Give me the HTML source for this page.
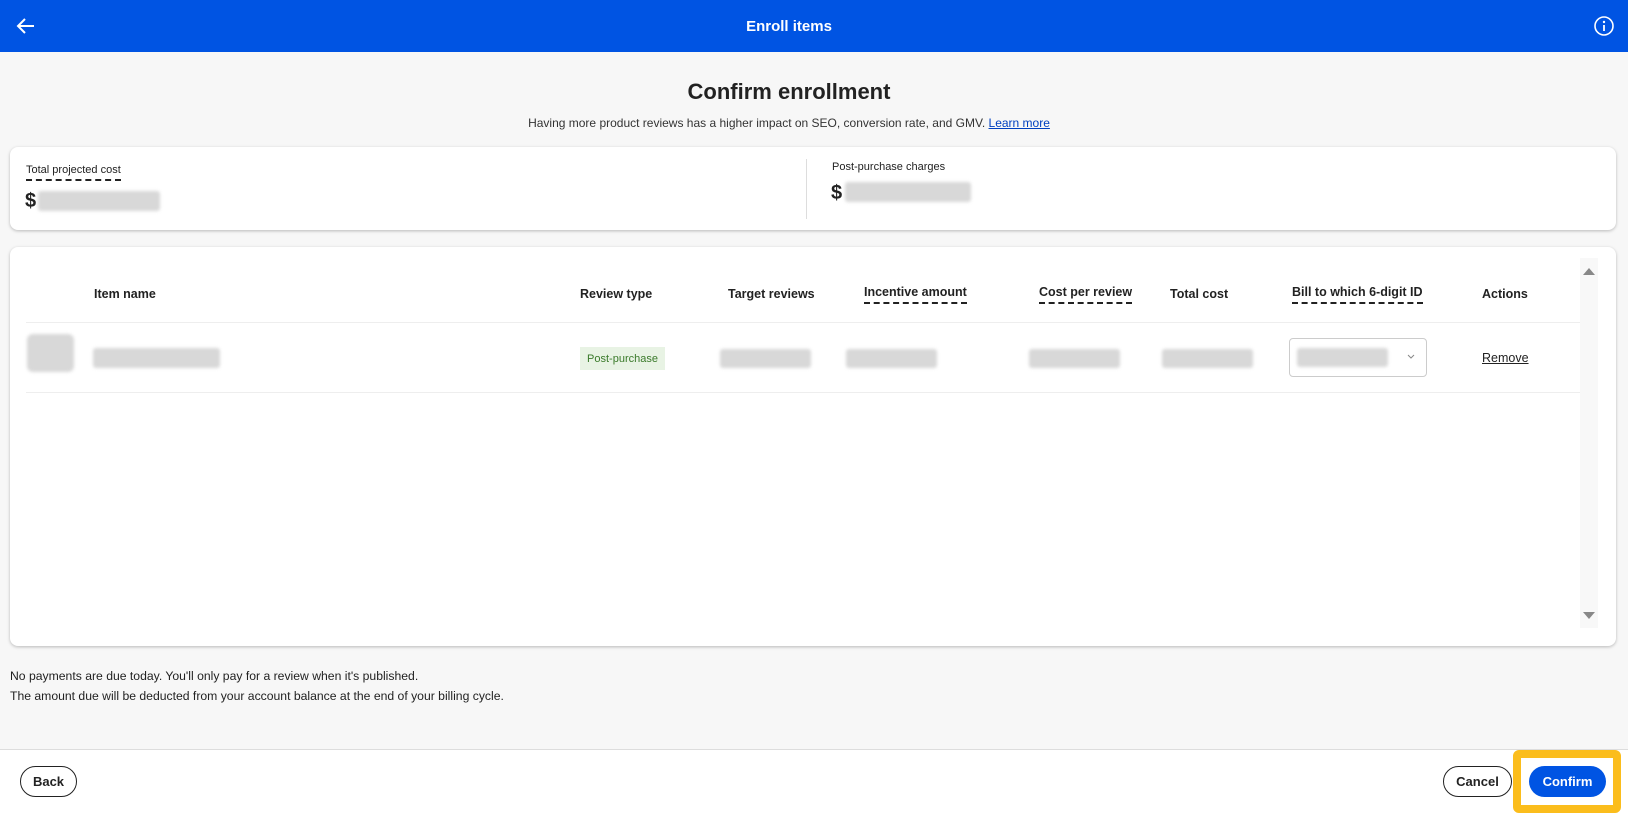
<!DOCTYPE html>
<html><head><meta charset="utf-8"><style>
*{box-sizing:border-box;margin:0;padding:0}
body{width:1628px;height:813px;overflow:hidden;background:#f7f7f7;font-family:"Liberation Sans",sans-serif;color:#222;position:relative}
.abs{position:absolute}
.hdr{left:0;top:0;width:1628px;height:52px;background:#0054e3;color:#fff}
.card{background:#fff;border-radius:8px;box-shadow:0 1px 3px rgba(0,0,0,.25)}
.blur{background:#d8d8d8;border-radius:3px;filter:blur(1.5px)}
.th{font-size:12.5px;font-weight:bold;top:287px;color:#222}
.dash{border-bottom:2px dashed #222;padding-bottom:3px}
.btn{border-radius:16px;font-weight:bold;font-size:13px;display:flex;align-items:center;justify-content:center}
</style></head><body>
<div class="abs hdr">
 <svg class="abs" style="left:15px;top:15px" width="22" height="22" viewBox="0 0 22 22"><path d="M19 11H3M10 4L3 11l7 7" stroke="#fff" stroke-width="2" fill="none"/></svg>
 <div class="abs" style="left:0;width:1578px;top:18px;text-align:center;font-size:15px;font-weight:bold">Enroll items</div>
 <svg class="abs" style="left:1593px;top:15px" width="22" height="22" viewBox="0 0 22 22"><circle cx="11" cy="11" r="9" stroke="#fff" stroke-width="1.6" fill="none"/><path d="M11 10v6" stroke="#fff" stroke-width="1.8"/><circle cx="11" cy="7" r="1.2" fill="#fff"/></svg>
</div>
<div class="abs" style="left:0;width:1578px;top:79px;text-align:center;font-size:22px;font-weight:bold">Confirm enrollment</div>
<div class="abs" style="left:0;width:1578px;top:116px;text-align:center;font-size:12px;color:#333">Having more product reviews has a higher impact on SEO, conversion rate, and GMV. <span style="color:#0040c0;text-decoration:underline">Learn more</span></div>

<div class="abs card" style="left:10px;top:147px;width:1606px;height:83px"></div>
<div class="abs" style="left:26px;top:164px;font-size:11px"><span class="dash">Total projected cost</span></div>
<div class="abs" style="left:25px;top:190px;font-size:20px;font-weight:bold">$</div>
<div class="abs blur" style="left:38px;top:191px;width:122px;height:20px"></div>
<div class="abs" style="left:806px;top:159px;width:1px;height:60px;background:#ddd"></div>
<div class="abs" style="left:832px;top:161px;font-size:11px">Post-purchase charges</div>
<div class="abs" style="left:831px;top:182px;font-size:20px;font-weight:bold">$</div>
<div class="abs blur" style="left:845px;top:182px;width:126px;height:20px"></div>

<div class="abs card" style="left:10px;top:247px;width:1606px;height:399px"></div>
<div class="abs" style="left:1580px;top:258px;width:18px;height:370px;background:#f8f8f8"></div>
<svg class="abs" style="left:1583px;top:266px" width="12" height="10"><path d="M0 9L6 2L12 9Z" fill="#888"/></svg>
<svg class="abs" style="left:1583px;top:611px" width="12" height="10"><path d="M0 1L6 8L12 1Z" fill="#888"/></svg>
<div class="abs th" style="left:94px">Item name</div>
<div class="abs th" style="left:580px">Review type</div>
<div class="abs th" style="left:728px">Target reviews</div>
<div class="abs th" style="left:864px;top:285px"><span class="dash">Incentive amount</span></div>
<div class="abs th" style="left:1039px;top:285px"><span class="dash">Cost per review</span></div>
<div class="abs th" style="left:1170px">Total cost</div>
<div class="abs th" style="left:1292px;top:285px"><span class="dash">Bill to which 6-digit ID</span></div>
<div class="abs th" style="left:1482px">Actions</div>
<div class="abs" style="left:26px;top:322px;width:1554px;height:1px;background:#eee"></div>
<div class="abs" style="left:26px;top:392px;width:1554px;height:1px;background:#eee"></div>
<div class="abs blur" style="left:27px;top:334px;width:47px;height:38px;border-radius:6px"></div>
<div class="abs blur" style="left:93px;top:348px;width:127px;height:20px"></div>
<div class="abs" style="left:580px;top:347px;width:85px;height:23px;background:#e8f3e4;color:#3a7a2a;font-size:11px;display:flex;align-items:center;justify-content:center">Post-purchase</div>
<div class="abs blur" style="left:720px;top:349px;width:91px;height:19px"></div>
<div class="abs blur" style="left:846px;top:349px;width:91px;height:19px"></div>
<div class="abs blur" style="left:1029px;top:349px;width:91px;height:19px"></div>
<div class="abs blur" style="left:1162px;top:349px;width:91px;height:19px"></div>
<div class="abs" style="left:1289px;top:338px;width:138px;height:39px;border:1px solid #ccc;border-radius:4px;background:#fff"></div>
<div class="abs blur" style="left:1297px;top:348px;width:91px;height:19px"></div>
<svg class="abs" style="left:1407px;top:354px" width="8" height="6"><path d="M1 1l3 3 3-3" stroke="#888" fill="none"/></svg>
<div class="abs" style="left:1482px;top:351px;font-size:12.5px;text-decoration:underline">Remove</div>

<div class="abs" style="left:10px;top:666px;font-size:12.2px;line-height:20px;color:#222">No payments are due today. You'll only pay for a review when it's published.<br>The amount due will be deducted from your account balance at the end of your billing cycle.</div>

<div class="abs" style="left:0;top:749px;width:1628px;height:64px;background:#fff;border-top:1px solid #ddd"></div>
<div class="abs btn" style="left:20px;top:766px;width:57px;height:31px;border:1.5px solid #222;background:#fff">Back</div>
<div class="abs btn" style="left:1443px;top:766px;width:69px;height:31px;border:1.5px solid #222;background:#fff">Cancel</div>
<div class="abs" style="left:1513px;top:750px;width:108px;height:63px;border:8px solid #fbbd1c;border-radius:6px"></div>
<div class="abs btn" style="left:1529px;top:766px;width:77px;height:31px;background:#0054e3;color:#fff">Confirm</div>
</body></html>
